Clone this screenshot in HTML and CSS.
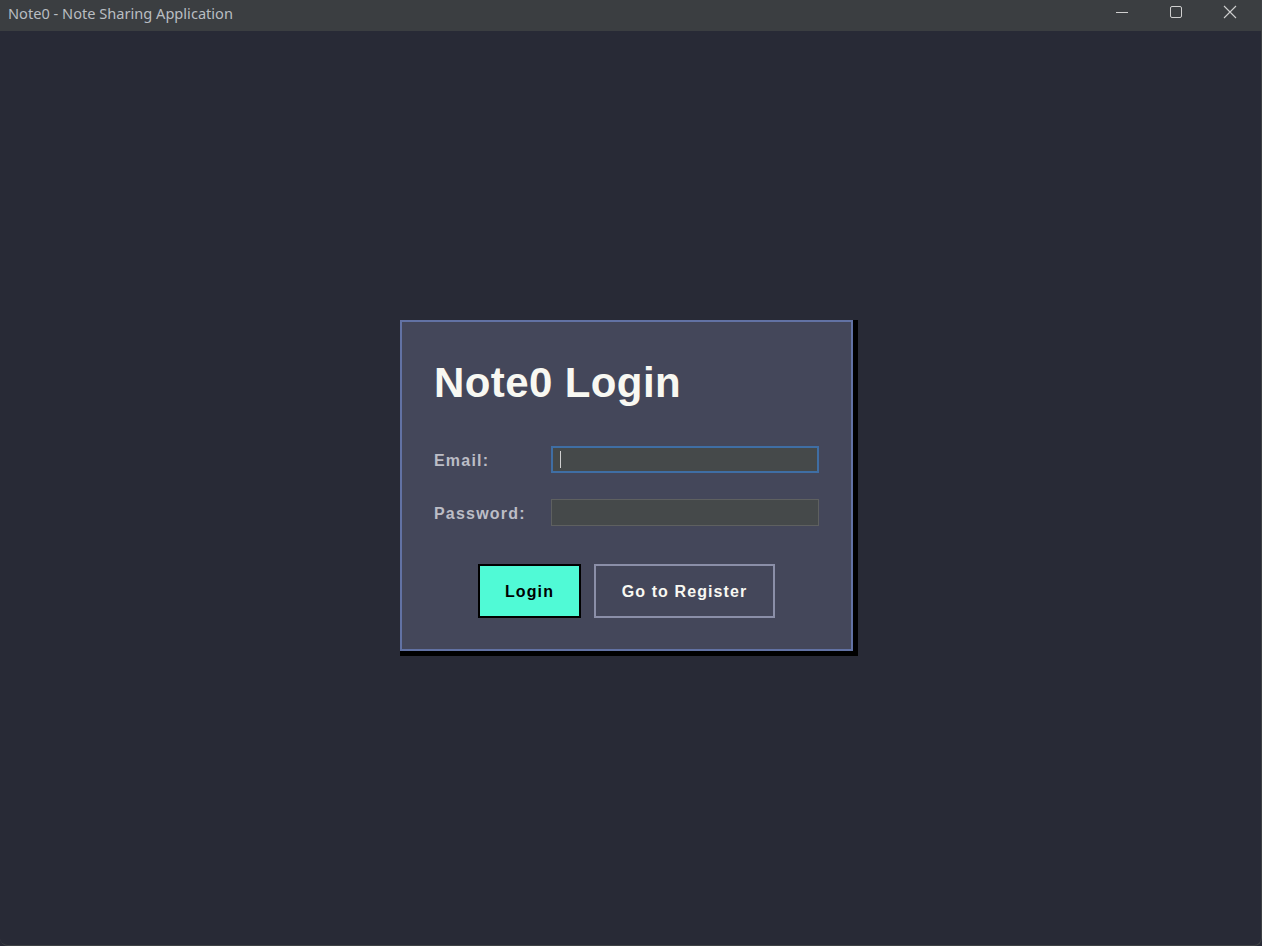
FILE: index.html
```html
<!DOCTYPE html>
<html lang="en">
<head>
<meta charset="utf-8">
<title>Note0 - Note Sharing Application</title>
<link rel="stylesheet" href="styles.css">
</head>
<body>
<div class="window">
  <header class="titlebar">
    <span class="app-title">Note0 - Note Sharing Application</span>
    <div class="controls">
      <span class="ctl">
        <svg width="14" height="14" viewBox="0 0 14 14"><line x1="1" y1="7.5" x2="13" y2="7.5" stroke="#cfcfcf" stroke-width="1"/></svg>
      </span>
      <span class="ctl">
        <svg width="14" height="14" viewBox="0 0 14 14"><rect x="1.5" y="1.5" width="11" height="11" rx="1.5" fill="none" stroke="#cfcfcf" stroke-width="1"/></svg>
      </span>
      <span class="ctl">
        <svg width="14" height="14" viewBox="0 0 14 14"><path d="M1 1 L13 13 M13 1 L1 13" stroke="#cfcfcf" stroke-width="1.1"/></svg>
      </span>
    </div>
  </header>
  <main class="content">
    <section class="card">
      <h1 class="title">Note0 Login</h1>
      <div class="form">
        <label class="label" for="email">Email:</label>
        <div class="field focused"><span class="caret"></span></div>
        <label class="label" for="password">Password:</label>
        <div class="field"></div>
      </div>
      <div class="actions">
        <button class="btn btn-primary">Login</button>
        <button class="btn btn-secondary">Go to Register</button>
      </div>
    </section>
  </main>
</div>
</body>
</html>
```

FILE: styles.css
```css
* { box-sizing: border-box; }
html, body { margin: 0; padding: 0; }
body {
  width: 1262px;
  height: 946px;
  overflow: hidden;
  background: #282a36;
  font-family: "Liberation Sans", Arial, sans-serif;
}
.window {
  width: 1262px;
  height: 946px;
  display: flex;
  flex-direction: column;
  background: #282a36;
  border-right: 1px solid #3e4144;
  border-bottom: 1px solid #3e4144;
  border-radius: 0 0 8px 8px;
  overflow: hidden;
}
.titlebar {
  height: 31px;
  flex: none;
  background: #3b3e41;
  display: flex;
  align-items: center;
  justify-content: space-between;
  padding-left: 8px;
}
.app-title {
  font-family: "Noto Sans", "Open Sans", sans-serif;
  font-size: 14.6px;
  color: #b9bdc1;
  margin-top: -6px;
}
.controls {
  display: flex;
  height: 100%;
  padding-right: 4px;
}
.ctl {
  width: 54px;
  height: 100%;
  display: flex;
  align-items: flex-start;
  justify-content: center;
  padding-top: 5px;
}
.content {
  flex: 1;
  display: flex;
  align-items: center;
  justify-content: center;
  padding: 0 8px 6px 0;
}
.card {
  width: 453px;
  height: 331px;
  background: #44475a;
  border: 2px solid #6272a4;
  padding: 37px 32px 31px;
  box-shadow: 5px 0 0 #000, 0 5px 0 #000, 5px 5px 0 #000;
  display: flex;
  flex-direction: column;
}
.title {
  margin: 0;
  font-size: 42px;
  line-height: 48px;
  font-weight: bold;
  letter-spacing: 0.4px;
  color: #f8f8f2;
}
.form {
  margin-top: 39px;
  display: grid;
  grid-template-columns: 117px 268px;
  grid-auto-rows: 27px;
  row-gap: 26px;
  align-items: center;
}
.label {
  font-size: 16px;
  font-weight: bold;
  letter-spacing: 1.2px;
  color: #bcbdc6;
  padding-top: 3px;
}
.field {
  height: 27px;
  background: #45494a;
  border: 1px solid #5e6060;
  position: relative;
}
.field.focused {
  border: 2px solid #3f6ea4;
}
.caret {
  position: absolute;
  left: 7px;
  top: 3px;
  width: 1px;
  height: 17px;
  background: #cfcfcf;
}
.actions {
  margin-top: 38px;
  display: flex;
  justify-content: center;
  gap: 13px;
}
.btn {
  height: 54px;
  font-family: "Liberation Sans", Arial, sans-serif;
  font-size: 16px;
  font-weight: bold;
  letter-spacing: 1.1px;
  cursor: pointer;
  padding: 2px 0 0;
}
.btn-primary {
  width: 103px;
  background: #50fad6;
  color: #000;
  border: 2px solid #000;
}
.btn-secondary {
  width: 181px;
  background: #44475a;
  color: #f8f8f2;
  border: 2px solid #8b8fa8;
}
```
